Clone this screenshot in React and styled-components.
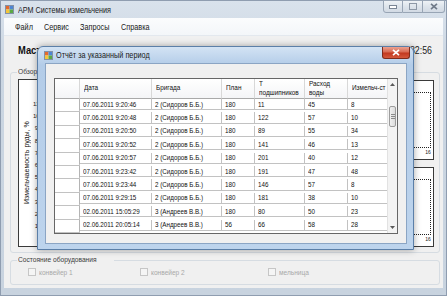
import React from 'react';
import styled, { createGlobalStyle, css } from 'styled-components';

const FONT = `"Liberation Sans", Arial, sans-serif`;
const COLS = '25px 72px 70px 33px 50px 43px 50px';

const GlobalStyle = createGlobalStyle`
  html, body {
    margin: 0;
    padding: 0;
  }
  body {
    width: 447px;
    height: 296px;
    overflow: hidden;
    font-family: ${FONT};
    background: #cfd9e4;
  }
  #root {
    width: 447px;
    height: 296px;
  }
  * {
    box-sizing: border-box;
  }
`;

// the old WinForms text is narrower than Arial, squeeze it a bit
const Narrow = styled.span`
  display: inline-block;
  white-space: ${({ $pre }) => ($pre ? 'pre-line' : 'nowrap')};
  transform: scaleX(${({ $k }) => $k || 0.8});
  transform-origin: ${({ $right }) => ($right ? 'right' : 'left')} center;
`;

const Window = styled.div`
  position: relative;
  display: flex;
  flex-direction: column;
  width: 447px;
  height: 296px;
  padding: 0 3px 7px 3px;
  background: linear-gradient(#d9e2ec, #cbd6e2 60px, #c8d3df);
  border: 1px solid #8f9db0;
`;

const TitleBar = styled.div`
  display: flex;
  align-items: center;
  gap: 4px;
  height: 17px;
  padding-left: 1px;
`;

const TitleText = styled.span`
  font-size: 9px;
  color: #1b1b1b;
  white-space: nowrap;
`;

const Controls = styled.div`
  display: flex;
  align-self: flex-start;
  margin: -1px -2px 0 auto;
`;

const CtlBtn = styled.div`
  display: flex;
  align-items: center;
  justify-content: center;
  width: ${({ $wide }) => ($wide ? '22px' : '20px')};
  height: 13px;
  background: linear-gradient(#eef2f6, #dde4eb 50%, #d2dae4);
  border: 1px solid #98a5b5;
  border-left-width: ${({ $first }) => ($first ? '1px' : '0')};
  ${({ $first }) => $first && css`border-bottom-left-radius: 3px;`}
  ${({ $wide }) => $wide && css`border-bottom-right-radius: 3px;`}
`;

const MenuBar = styled.div`
  display: flex;
  align-items: center;
  height: 18px;
  padding-left: 11px;
  background: linear-gradient(#fbfcfd, #f3f6f9);
  border-bottom: 1px solid #e3e8ee;
`;

const MenuItem = styled.span`
  width: ${({ $w }) => $w}px;
  font-size: 9px;
  color: #1a1a1a;
`;

const Client = styled.div`
  display: flex;
  flex-direction: column;
  flex: 1;
  background: #f0f0f0;
`;

const MasterRow = styled.div`
  display: flex;
  align-items: center;
  justify-content: space-between;
  height: 10px;
  margin-top: 9px;
  padding: 0 11px 0 14px;
`;

const MasterLabel = styled.span`
  font-size: 11px;
  font-weight: bold;
  color: #111;
`;

const Clock = styled.span`
  font-size: 10px;
  color: #222;
`;

const Group = styled.fieldset`
  min-width: 0;
  margin: ${({ $top }) => $top}px 3px 0 6px;
  padding: 2px ${({ $right }) => $right}px ${({ $bottom }) => $bottom}px 7px;
  border: 1px solid #d6dce2;
  border-radius: 3px;
`;

const Legend = styled.legend`
  margin-left: -1px;
  padding: 0 1px;
  font-size: 8px;
  line-height: 10px;
  color: #3c3c3c;
`;

const Overview = styled.div`
  display: flex;
  gap: 7px;
  height: 168px;
`;

const BigChart = styled.div`
  display: flex;
  flex: 1;
  background: #fff;
  border: 1px solid #3a3a3a;
`;

const AxisTitle = styled.div`
  display: flex;
  align-items: center;
  justify-content: center;
  width: 14px;
  font-size: 7px;
  color: #111;
  writing-mode: vertical-rl;
  transform: rotate(180deg);
  white-space: nowrap;
`;

const YTicks = styled.div`
  display: flex;
  flex-direction: column;
  justify-content: space-between;
  width: 5px;
  padding: 21px 0 17px;
  font-size: 6px;
  line-height: 6px;
  text-align: right;
  color: #222;
`;

const Plot = styled.div`
  flex: 1;
  border: 1px dotted #222;
`;

const BigPlot = styled(Plot)`
  margin: 12px 4px 14px 2px;
`;

const SideCharts = styled.div`
  display: flex;
  flex-direction: column;
  gap: 7px;
  width: 200px;
  padding-top: 1px;
`;

const SmallChart = styled.div`
  display: flex;
  flex-direction: column;
  flex: 1;
  padding: 11px 2px 2px 20px;
  background: #fff;
  border: 1px solid #3a3a3a;
`;

const XTicks = styled.div`
  display: flex;
  justify-content: space-between;
  height: 9px;
  padding: 2px 0 0 10px;
  font-size: 5px;
  line-height: 5px;
  color: #222;
`;

const CheckRow = styled.div`
  display: flex;
  align-items: center;
  height: 10px;
  padding-left: 10px;
`;

const CheckItem = styled.label`
  display: flex;
  align-items: center;
  gap: 3px;
  width: ${({ $w }) => ($w ? `${$w}px` : 'auto')};
  font-size: 8px;
  color: #a8a8a8;
`;

const CheckBox = styled.span`
  flex: none;
  width: 8px;
  height: 8px;
  background: #f5f5f5;
  border: 1px solid #c6c6c6;
`;

/* ---- dialog ---- */

const Dialog = styled.div`
  position: absolute;
  left: 36px;
  top: 45px;
  display: flex;
  flex-direction: column;
  width: 377px;
  height: 204px;
  padding: 0 6px 5px 7px;
  background: linear-gradient(#d3e3f4, #b3cce8 18px, #bdd4ed);
  border: 1px solid #5b7fa8;
  border-radius: 6px 6px 0 0;
  box-shadow: 0 0 7px rgba(0, 0, 0, 0.35);
`;

const DialogTitle = styled.div`
  display: flex;
  align-items: center;
  gap: 3px;
  height: 18px;
  margin: 0 -6px 0 -7px;
  padding-left: 6px;
`;

const CloseBtn = styled.div`
  display: flex;
  align-items: center;
  justify-content: center;
  align-self: flex-start;
  width: 28px;
  height: 12px;
  margin: 0 3px 0 auto;
  background: linear-gradient(#eba190, #d86a52 45%, #c2381f 55%, #d4583c);
  border: 1px solid #7e2b1b;
  border-top: none;
  border-radius: 0 0 3px 3px;
`;

const DialogBody = styled.div`
  display: flex;
  flex: 1;
  padding: 14px 8px 9px 8px;
  background: #f0f0f0;
  border: 1px solid #8ba5c4;
`;

const Grid = styled.div`
  display: flex;
  flex: 1;
  background: #fff;
  border: 1px solid #666;
  overflow: hidden;
`;

const Table = styled.div`
  flex: 1;
  min-width: 0;
  overflow: hidden;
`;

const Row = styled.div`
  display: grid;
  grid-template-columns: ${COLS};
  height: ${({ $head }) => ($head ? '20px' : '13.4px')};
`;

const Cell = styled.div`
  display: flex;
  align-items: center;
  padding-left: 3px;
  font-size: 8px;
  color: #111;
  overflow: hidden;
  background: #fff;
  border-right: 1px solid #c2c2c2;
  border-bottom: 1px solid #c2c2c2;
`;

const HeadCell = styled(Cell)`
  padding-left: 4px;
  line-height: 8.5px;
  background: linear-gradient(#ffffff, #f4f5f7);
  border-right-color: #d8d8d8;
  border-bottom-color: #a9a9a9;
`;

const RowHead = styled(Cell)`
  border-bottom: none;
  border-right-color: #b4b4b4;
`;

const Scrollbar = styled.div`
  display: flex;
  flex-direction: column;
  width: 10px;
  background: #f3f3f3;
  border-left: 1px solid #e2e2e2;
`;

const Arrow = styled.div`
  display: flex;
  align-items: center;
  justify-content: center;
  height: 11px;
`;

const Track = styled.div`
  flex: 1;
  padding-top: 16px;
`;

const Thumb = styled.div`
  display: flex;
  flex-direction: column;
  align-items: center;
  justify-content: center;
  gap: 1px;
  height: 21px;
  margin: 0 1px;
  background: linear-gradient(90deg, #f0f0f0, #dcdcdc);
  border: 1px solid #9c9c9c;
  border-radius: 2px;
`;

const Grip = styled.span`
  width: 4px;
  height: 1px;
  background: #8a8a8a;
`;

const AppIcon = () => (
  <svg width="9" height="9" viewBox="0 0 9 9">
    <rect x="0.5" y="0.5" width="8" height="8" fill="#e9eef5" stroke="#8391a6" />
    <rect x="1" y="1" width="3.5" height="3.5" fill="#e46a2e" />
    <rect x="4.5" y="1" width="3.5" height="3.5" fill="#4f86d4" />
    <rect x="1" y="4.5" width="3.5" height="3.5" fill="#f3c53a" />
    <rect x="4.5" y="4.5" width="3.5" height="3.5" fill="#5aa845" />
  </svg>
);

const ArrowIcon = ({ down }) => (
  <svg width="5" height="3" viewBox="0 0 5 3">
    <path d={down ? 'M0 0 L5 0 L2.5 3 Z' : 'M0 3 L5 3 L2.5 0 Z'} fill="#5a5a5a" />
  </svg>
);

const heads = ['', 'Дата', 'Бригада', 'План', 'T\nподшипников', 'Расход\nводы', 'Измельч-ст'];

const rows = [
  ['07.06.2011 9:20:46', '2 (Сидоров Б.Б.)', '180', '11', '45', '8'],
  ['07.06.2011 9:20:48', '2 (Сидоров Б.Б.)', '180', '122', '57', '10'],
  ['07.06.2011 9:20:50', '2 (Сидоров Б.Б.)', '180', '89', '55', '34'],
  ['07.06.2011 9:20:52', '2 (Сидоров Б.Б.)', '180', '141', '46', '13'],
  ['07.06.2011 9:20:57', '2 (Сидоров Б.Б.)', '180', '201', '40', '12'],
  ['07.06.2011 9:23:42', '2 (Сидоров Б.Б.)', '180', '191', '47', '48'],
  ['07.06.2011 9:23:44', '2 (Сидоров Б.Б.)', '180', '146', '57', '8'],
  ['07.06.2011 9:29:15', '2 (Сидоров Б.Б.)', '180', '181', '38', '10'],
  ['02.06.2011 15:05:29', '3 (Андреев В.В.)', '180', '80', '50', '23'],
  ['02.06.2011 20:05:14', '3 (Андреев В.В.)', '56', '66', '58', '28'],
];

const menu = [
  ['Файл', 29],
  ['Сервис', 36],
  ['Запросы', 41],
  ['Справка', 40],
];

const yTicks = ['11', '10', '9', '8', '7', '6', '5', '4', '3', '2', '1'];
const xTicks = ['0', '2', '4', '6', '8', '10', '12', '14', '16'];

const ReportDialog = () => (
  <Dialog>
    <DialogTitle>
      <AppIcon />
      <TitleText>
        <Narrow $k={0.81}>Отчёт за указанный период</Narrow>
      </TitleText>
      <CloseBtn>
        <svg width="8" height="7" viewBox="0 0 8 7">
          <path d="M1 0.8 L7 6.2 M7 0.8 L1 6.2" stroke="#fff" strokeWidth="1.7" />
        </svg>
      </CloseBtn>
    </DialogTitle>
    <DialogBody>
      <Grid>
        <Table>
          <Row $head>
            {heads.map((h, i) => (
              <HeadCell key={i}>
                <Narrow $pre $k={0.8}>{h}</Narrow>
              </HeadCell>
            ))}
          </Row>
          {rows.map((r, i) => (
            <Row key={i}>
              <RowHead />
              {r.map((c, j) => (
                <Cell key={j}>
                  <Narrow $k={0.78}>{c}</Narrow>
                </Cell>
              ))}
              <Cell />
            </Row>
          ))}
        </Table>
        <Scrollbar>
          <Arrow>
            <ArrowIcon />
          </Arrow>
          <Track>
            <Thumb>
              <Grip />
              <Grip />
              <Grip />
            </Thumb>
          </Track>
          <Arrow>
            <ArrowIcon down />
          </Arrow>
        </Scrollbar>
      </Grid>
    </DialogBody>
  </Dialog>
);

const App = () => {
  return (
    <>
      <GlobalStyle />
      <Window>
        <TitleBar>
          <AppIcon />
          <TitleText>
            <Narrow $k={0.8}>АРМ Системы измельчения</Narrow>
          </TitleText>
          <Controls>
            <CtlBtn $first>
              <svg width="8" height="4" viewBox="0 0 8 4">
                <rect x="0.5" y="0.5" width="7" height="3" fill="#fff" stroke="#7b8796" />
              </svg>
            </CtlBtn>
            <CtlBtn>
              <svg width="8" height="7" viewBox="0 0 8 7">
                <rect x="0.5" y="0.5" width="7" height="6" fill="none" stroke="#8d98a6" />
              </svg>
            </CtlBtn>
            <CtlBtn $wide>
              <svg width="8" height="7" viewBox="0 0 8 7">
                <path d="M1 0.8 L7 6.2 M7 0.8 L1 6.2" stroke="#6f7a88" strokeWidth="1.6" />
              </svg>
            </CtlBtn>
          </Controls>
        </TitleBar>
        <Client>
          <MenuBar>
            {menu.map(([label, w]) => (
              <MenuItem key={label} $w={w}>
                <Narrow $k={0.81}>{label}</Narrow>
              </MenuItem>
            ))}
          </MenuBar>
          <MasterRow>
            <MasterLabel>
              <Narrow $k={0.85}>Мастер</Narrow>
            </MasterLabel>
            <Clock>
              <Narrow $right $k={0.88}>12:32:56</Narrow>
            </Clock>
          </MasterRow>
          <Group $top={12} $right={5} $bottom={5}>
            <Legend>
              <Narrow $k={0.83}>Обзор</Narrow>
            </Legend>
            <Overview>
              <BigChart>
                <AxisTitle>Измельчаемость руды, %</AxisTitle>
                <YTicks>
                  {yTicks.map((t) => (
                    <span key={t}>{t}</span>
                  ))}
                </YTicks>
                <BigPlot />
              </BigChart>
              <SideCharts>
                {[0, 1].map((k) => (
                  <SmallChart key={k}>
                    <Plot />
                    <XTicks>
                      {xTicks.map((t) => (
                        <span key={t}>{t}</span>
                      ))}
                    </XTicks>
                  </SmallChart>
                ))}
              </SideCharts>
            </Overview>
          </Group>
          <Group $top={2} $right={10} $bottom={7}>
            <Legend>
              <Narrow $k={0.83}>Состояние оборудования</Narrow>
            </Legend>
            <CheckRow>
              <CheckItem $w={112}>
                <CheckBox />
                <Narrow $k={0.82}>конвейер 1</Narrow>
              </CheckItem>
              <CheckItem $w={128}>
                <CheckBox />
                <Narrow $k={0.82}>конвейер 2</Narrow>
              </CheckItem>
              <CheckItem>
                <CheckBox />
                <Narrow $k={0.82}>мельница</Narrow>
              </CheckItem>
            </CheckRow>
          </Group>
        </Client>
        <ReportDialog />
      </Window>
    </>
  );
};

export default App;
